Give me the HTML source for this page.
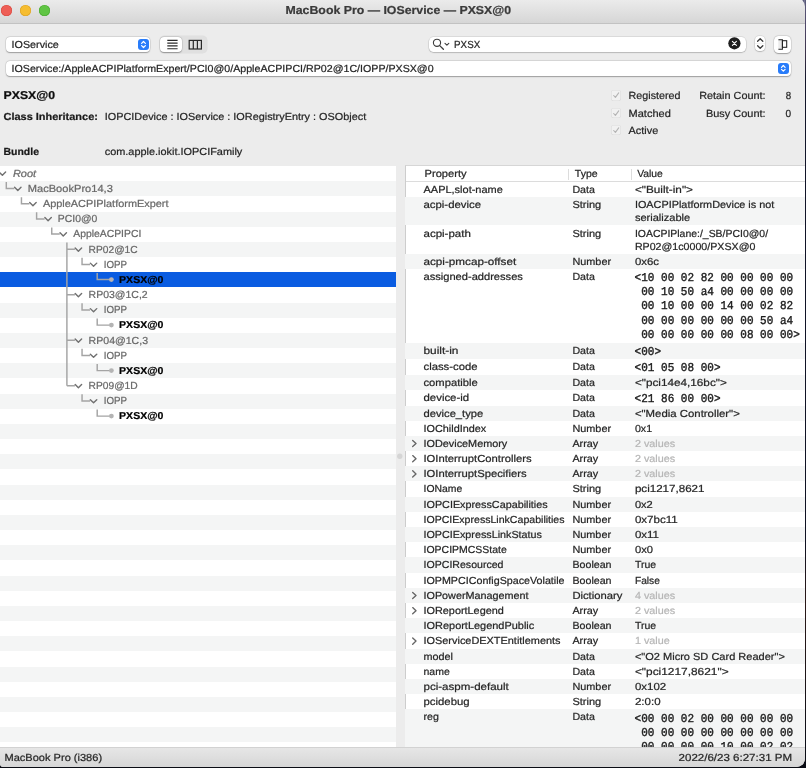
<!DOCTYPE html>
<html>
<head>
<meta charset="utf-8">
<title>MacBook Pro — IOService — PXSX@0</title>
<style>
*{margin:0;padding:0;box-sizing:border-box}
html,body{width:806px;height:768px;overflow:hidden}
body{background:linear-gradient(#5a5a7a 0,#50486a 25px,#3a3048 55px,#12152a 80px,#0e1122 540px,#2a1818 600px,#1c1418 680px,#0c0e18 740px,#0a0c14 100%);font-family:"Liberation Sans",sans-serif;font-size:10.2px;color:#262626;position:relative}
.abs{position:absolute}
#win{position:absolute;left:0;top:0;width:804.8px;height:766.5px;background:#ececec;border-radius:0 0 8.5px 3.5px;overflow:hidden;will-change:transform}
#title{position:absolute;left:0;top:0;width:100%;height:24px;background:linear-gradient(#ebebeb,#d6d6d6);border-bottom:1px solid #c2c2c2}
.tl{position:absolute;top:5px;width:11.2px;height:11.2px;border-radius:50%}
.field{position:absolute;background:#fff;border-radius:4px;box-shadow:0 0 0 .5px rgba(0,0,0,.10),0 .6px 1.2px rgba(0,0,0,.30)}
.txt{position:absolute;white-space:nowrap;line-height:12px;transform-origin:0 0;text-rendering:geometricPrecision;-webkit-text-stroke:.22px}
.mono{position:absolute;white-space:pre;font-family:"Liberation Mono",monospace;font-size:11.5px;line-height:14.22px;color:#1c1c1c;transform:scaleX(.949);transform-origin:0 0;text-rendering:geometricPrecision;-webkit-text-stroke:.4px}
.blue{position:absolute;width:11px;height:11px;border-radius:3px;background:#287cfa}
#left{position:absolute;left:0;top:166px;width:396px;height:581.4px;overflow:hidden;
 background:repeating-linear-gradient(#fff 0,#fff 15.17px,#f4f5f5 15.17px,#f4f5f5 30.34px)}
#right{position:absolute;left:404.7px;top:164.9px;width:401px;height:582.5px;background:#fff;overflow:hidden;border-left:1px solid #cdcdcd;border-top:1px solid #d6d6d6}
#status{position:absolute;left:0;top:747.4px;width:100%;height:19.2px;background:linear-gradient(#e6e6e6,#d6d6d6);border-top:1px solid #d2d2d2}
.g{position:absolute;left:405.4px;width:400px;background:#f4f5f5}
</style>
</head>
<body>
<div id="win">

<div id="title">
<div class="tl" style="left:1px;background:#ee5e56;box-shadow:inset 0 0 0 .6px #d9473e"></div>
<div class="tl" style="left:20px;background:#f6bd30;box-shadow:inset 0 0 0 .6px #dca122"></div>
<div class="tl" style="left:39px;background:#60c544;box-shadow:inset 0 0 0 .6px #49a830"></div>
</div>
<div class="txt" style="left:285px;top:5px;font-size:11.6px;color:#3a3a3a;transform:translateX(0.50px) scaleX(1.0628);font-weight:bold;">MacBook Pro — IOService — PXSX@0</div>
<div class="field" style="left:5.5px;top:36.5px;width:144.5px;height:15.5px"></div>
<div class="blue" style="left:137.7px;top:39px"><svg width="11" height="11" viewBox="0 0 11 11" style="position:absolute;left:0;top:0"><path d="M3.6 4.4 5.5 2.5 7.4 4.4M3.6 6.6 5.5 8.5 7.4 6.6" fill="none" stroke="#fff" stroke-width="1.2" stroke-linecap="round" stroke-linejoin="round"/></svg></div>
<div class="abs" style="left:159.5px;top:36.2px;width:47px;height:16.4px;border-radius:4.5px;background:#e0e0e0;box-shadow:0 0 0 .5px rgba(0,0,0,.06)"></div>
<div class="field" style="left:160px;top:36.6px;width:21.5px;height:15.6px;border-radius:4px"></div>
<svg class="abs" style="left:159.5px;top:36.2px" width="47" height="17" viewBox="0 0 47 17"><path d="M7.3 4.4h10.3M7.3 7.1h10.3M7.3 9.9h10.3M7.3 12.7h10.3" stroke="#2a2a2a" stroke-width="1.15" fill="none"/><rect x="29.2" y="4.4" width="12.2" height="8.6" fill="none" stroke="#2a2a2a" stroke-width="1.2"/><path d="M33.3 4.4v8.6M37.4 4.4v8.6" stroke="#2a2a2a" stroke-width="1.2"/></svg>
<div class="field" style="left:429px;top:36.8px;width:317px;height:15.5px;border-radius:4.5px"></div>
<svg class="abs" style="left:431px;top:37px" width="22" height="15" viewBox="0 0 22 15"><circle cx="6" cy="5.8" r="3.6" fill="none" stroke="#3c3c3c" stroke-width="1.1"/><path d="M8.7 8.6 12.4 12.3" stroke="#3c3c3c" stroke-width="1.3" stroke-linecap="round"/><path d="M14 6.3 15.9 8.1 17.8 6.3" fill="none" stroke="#3c3c3c" stroke-width="1.1" stroke-linecap="round" stroke-linejoin="round"/></svg>
<svg class="abs" style="left:728px;top:36.8px" width="13" height="13" viewBox="0 0 13 13"><circle cx="6.4" cy="6.3" r="6.1" fill="#1f1f1f"/><path d="M4.4 4.3 8.4 8.3M8.4 4.3 4.4 8.3" stroke="#fff" stroke-width="1.1" stroke-linecap="round"/></svg>
<div class="field" style="left:754.8px;top:36.1px;width:10.4px;height:15.2px;border-radius:4px"></div>
<svg class="abs" style="left:754.8px;top:36.1px" width="11" height="16" viewBox="0 0 11 16"><path d="M2.6 5.3 5.2 2.7 7.8 5.3M2.6 9.7 5.2 12.3 7.8 9.7" fill="none" stroke="#3a3a3a" stroke-width="1.3" stroke-linecap="round" stroke-linejoin="round"/><path d="M0 7.6h10.4" stroke="#e8e8e8" stroke-width=".6"/></svg>
<div class="field" style="left:774px;top:36.1px;width:16.9px;height:16.8px;border-radius:4.5px"></div>
<svg class="abs" style="left:774px;top:36px" width="17" height="17" viewBox="0 0 17 17"><rect x="4.3" y="4.2" width="3.4" height="8.4" fill="#ebebeb"/><path d="M4.4 3.7h4v9.5h-4" fill="none" stroke="#222" stroke-width="1.05"/><rect x="8.4" y="4.7" width="4.3" height="6.6" fill="none" stroke="#222" stroke-width="1.05"/></svg>
<div class="field" style="left:5.5px;top:61px;width:785.3px;height:15px"></div>
<div class="blue" style="left:778px;top:63px;width:10.6px;height:10.6px"><svg width="11" height="11" viewBox="0 0 11 11" style="position:absolute;left:0;top:0"><path d="M3.5 4.3 5.3 2.5 7.1 4.3M3.5 6.4 5.3 8.2 7.1 6.4" fill="none" stroke="#fff" stroke-width="1.2" stroke-linecap="round" stroke-linejoin="round"/></svg></div>

<div class="txt" style="left:11px;top:40px;font-size:10.2px;color:#262626;transform:translateX(0.60px) scaleX(1.0541);">IOService</div>
<div class="txt" style="left:454px;top:40px;font-size:10.2px;color:#262626;transform:translateX(0.10px) scaleX(0.9591);">PXSX</div>
<div class="txt" style="left:11px;top:64px;font-size:10.2px;color:#262626;transform:translateX(0.60px) scaleX(1.0456);">IOService:/AppleACPIPlatformExpert/PCI0@0/AppleACPIPCI/RP02@1C/IOPP/PXSX@0</div>
<div class="txt" style="left:3px;top:90px;font-size:11.4px;color:#0d0d0d;transform:translateX(0.50px) scaleX(1.0780);font-weight:bold;">PXSX@0</div>
<div class="txt" style="left:3px;top:112px;font-size:10.2px;color:#1a1a1a;transform:translateX(0.50px) scaleX(1.0755);font-weight:bold;">Class Inheritance:</div>
<div class="txt" style="left:104px;top:112px;font-size:10.2px;color:#262626;transform:translateX(0.70px) scaleX(1.0667);">IOPCIDevice : IOService : IORegistryEntry : OSObject</div>
<div class="txt" style="left:3px;top:147px;font-size:10.2px;color:#1a1a1a;transform:translateX(0.50px) scaleX(1.0271);font-weight:bold;">Bundle</div>
<div class="txt" style="left:104px;top:147px;font-size:10.2px;color:#262626;transform:translateX(0.70px) scaleX(1.0709);">com.apple.iokit.IOPCIFamily</div>
<div class="abs" style="left:610.7px;top:90.3px;width:10.4px;height:10.4px;border-radius:2.6px;background:#f1f1f1;box-shadow:inset 0 0 0 .6px #dcdcdc"><svg width="10.4" height="10.4" viewBox="0 0 10.4 10.4" style="position:absolute;left:0;top:0"><path d="M2.7 5.5 4.4 7.4 7.7 2.9" fill="none" stroke="#b4b4b4" stroke-width="1.1" stroke-linecap="round" stroke-linejoin="round"/></svg></div>
<div class="txt" style="left:628px;top:91px;font-size:10.4px;color:#262626;transform:translateX(0.60px) scaleX(1.0319);">Registered</div>
<div class="abs" style="left:610.7px;top:107.6px;width:10.4px;height:10.4px;border-radius:2.6px;background:#f1f1f1;box-shadow:inset 0 0 0 .6px #dcdcdc"><svg width="10.4" height="10.4" viewBox="0 0 10.4 10.4" style="position:absolute;left:0;top:0"><path d="M2.7 5.5 4.4 7.4 7.7 2.9" fill="none" stroke="#b4b4b4" stroke-width="1.1" stroke-linecap="round" stroke-linejoin="round"/></svg></div>
<div class="txt" style="left:628px;top:109px;font-size:10.4px;color:#262626;transform:translateX(0.60px) scaleX(1.0579);">Matched</div>
<div class="abs" style="left:610.7px;top:124.7px;width:10.4px;height:10.4px;border-radius:2.6px;background:#f1f1f1;box-shadow:inset 0 0 0 .6px #dcdcdc"><svg width="10.4" height="10.4" viewBox="0 0 10.4 10.4" style="position:absolute;left:0;top:0"><path d="M2.7 5.5 4.4 7.4 7.7 2.9" fill="none" stroke="#b4b4b4" stroke-width="1.1" stroke-linecap="round" stroke-linejoin="round"/></svg></div>
<div class="txt" style="left:628px;top:126px;font-size:10.4px;color:#262626;transform:translateX(0.60px) scaleX(1.0452);">Active</div>
<div class="txt" style="left:699px;top:91px;font-size:10.4px;color:#262626;transform:translateX(0.20px) scaleX(1.0441);">Retain Count:</div>
<div class="txt" style="left:706px;top:109px;font-size:10.4px;color:#262626;transform:translateX(0.00px) scaleX(1.0520);">Busy Count:</div>
<div class="txt" style="left:785px;top:91px;font-size:10.4px;color:#262626;transform:translateX(0.80px) scaleX(0.9339);">8</div>
<div class="txt" style="left:785px;top:109px;font-size:10.4px;color:#262626;transform:translateX(0.60px) scaleX(0.9685);">0</div>
<div id="left"></div>
<div class="abs" style="left:0;top:272.19px;width:396px;height:15.17px;background:#0a5ce1"></div>
<svg class="abs" style="left:0;top:0" width="400" height="430" viewBox="0 0 400 430"><path d="M6.30 181.97V188.57H14.30M21.45 197.14V203.74H29.45M36.60 212.31V218.91H44.60M51.75 227.48V234.08H59.75M66.90 242.45V385.78M66.90 249.25H74.90M82.05 257.82V264.42H90.05M97.20 272.99V279.59H109.80M66.90 294.76H74.90M82.05 303.33V309.93H90.05M97.20 318.50V325.10H109.80M66.90 340.27H74.90M82.05 348.84V355.44H90.05M97.20 364.01V370.61H109.80M66.90 385.78H74.90M82.05 394.35V400.95H90.05M97.20 409.52V416.12H109.80" fill="none" stroke="#a4a4a4" stroke-width="1.45"/><path d="M-0.80 172.10L2.40 175.30L5.60 172.10M14.60 187.27L17.80 190.47L21.00 187.27M29.75 202.44L32.95 205.64L36.15 202.44M44.90 217.61L48.10 220.81L51.30 217.61M60.05 232.78L63.25 235.98L66.45 232.78M75.20 247.95L78.40 251.15L81.60 247.95M90.35 263.12L93.55 266.32L96.75 263.12M75.20 293.46L78.40 296.66L81.60 293.46M90.35 308.63L93.55 311.83L96.75 308.63M75.20 338.97L78.40 342.17L81.60 338.97M90.35 354.14L93.55 357.34L96.75 354.14M75.20 384.48L78.40 387.68L81.60 384.48M90.35 399.65L93.55 402.85L96.75 399.65" fill="none" stroke="#707070" stroke-width="1.4" stroke-linecap="round" stroke-linejoin="round"/><circle cx="111.40" cy="279.59" r="2.4" fill="#b9b3b3"/><circle cx="111.40" cy="325.10" r="2.4" fill="#b4b4b4"/><circle cx="111.40" cy="370.61" r="2.4" fill="#b4b4b4"/><circle cx="111.40" cy="416.12" r="2.4" fill="#b4b4b4"/></svg>
<div class="txt" style="left:12px;top:169px;font-size:10.2px;color:#686868;transform:translateX(0.90px) scaleX(1.0777);font-style:italic;">Root</div>
<div class="txt" style="left:27px;top:184px;font-size:10.2px;color:#686868;transform:translateX(0.80px) scaleX(1.0876);">MacBookPro14,3</div>
<div class="txt" style="left:42px;top:199px;font-size:10.2px;color:#686868;transform:translateX(0.90px) scaleX(1.0720);">AppleACPIPlatformExpert</div>
<div class="txt" style="left:57px;top:214px;font-size:10.2px;color:#686868;transform:translateX(0.80px) scaleX(1.0206);">PCI0@0</div>
<div class="txt" style="left:73px;top:229px;font-size:10.2px;color:#686868;transform:translateX(0.20px) scaleX(1.0195);">AppleACPIPCI</div>
<div class="txt" style="left:88px;top:245px;font-size:10.2px;color:#686868;transform:translateX(0.60px) scaleX(1.0039);">RP02@1C</div>
<div class="txt" style="left:103px;top:260px;font-size:10.2px;color:#686868;transform:translateX(0.70px) scaleX(0.9560);">IOPP</div>
<div class="txt" style="left:119px;top:275px;font-size:10.0px;color:#000;transform:translateX(0.10px) scaleX(1.0526);font-weight:bold;">PXSX@0</div>
<div class="txt" style="left:88px;top:290px;font-size:10.2px;color:#686868;transform:translateX(0.60px) scaleX(1.0293);">RP03@1C,2</div>
<div class="txt" style="left:103px;top:305px;font-size:10.2px;color:#686868;transform:translateX(0.70px) scaleX(0.9560);">IOPP</div>
<div class="txt" style="left:119px;top:320px;font-size:10.0px;color:#000;transform:translateX(0.10px) scaleX(1.0526);font-weight:bold;">PXSX@0</div>
<div class="txt" style="left:88px;top:336px;font-size:10.2px;color:#686868;transform:translateX(0.60px) scaleX(1.0363);">RP04@1C,3</div>
<div class="txt" style="left:103px;top:351px;font-size:10.2px;color:#686868;transform:translateX(0.70px) scaleX(0.9560);">IOPP</div>
<div class="txt" style="left:119px;top:366px;font-size:10.0px;color:#000;transform:translateX(0.10px) scaleX(1.0526);font-weight:bold;">PXSX@0</div>
<div class="txt" style="left:88px;top:381px;font-size:10.2px;color:#686868;transform:translateX(0.60px) scaleX(1.0039);">RP09@1D</div>
<div class="txt" style="left:103px;top:396px;font-size:10.2px;color:#686868;transform:translateX(0.70px) scaleX(0.9560);">IOPP</div>
<div class="txt" style="left:119px;top:411px;font-size:10.0px;color:#000;transform:translateX(0.10px) scaleX(1.0526);font-weight:bold;">PXSX@0</div>
<div id="right"></div>
<div class="abs" style="left:405.5px;top:181.2px;width:400px;height:1px;background:#dcdcdc"></div>
<div class="abs" style="left:568.4px;top:168.5px;width:1px;height:11px;background:#dcdcdc"></div>
<div class="abs" style="left:631.1px;top:168.5px;width:1px;height:11px;background:#dcdcdc"></div>
<div class="txt" style="left:424px;top:169px;font-size:10.2px;color:#262626;transform:translateX(0.50px) scaleX(1.0947);">Property</div>
<div class="txt" style="left:574px;top:169px;font-size:10.2px;color:#262626;transform:translateX(0.80px) scaleX(1.0356);">Type</div>
<div class="txt" style="left:637px;top:169px;font-size:10.2px;color:#262626;transform:translateX(0.20px) scaleX(1.0145);">Value</div>
<div class="abs" style="left:0;top:0;width:806px;height:747.4px;overflow:hidden">
<div class="txt" style="left:423px;top:185px;font-size:10.2px;color:#262626;transform:translateX(0.50px) scaleX(1.0773);">AAPL,slot-name</div>
<div class="txt" style="left:572px;top:185px;font-size:10.2px;color:#262626;transform:translateX(0.40px) scaleX(1.0442);">Data</div>
<div class="txt" style="left:634px;top:185px;font-size:10.2px;color:#262626;transform:translateX(0.90px) scaleX(1.1543);">&lt;"Built-in"&gt;</div>
<div class="g" style="top:196.90px;height:28.30px"></div>
<div class="txt" style="left:423px;top:200px;font-size:10.2px;color:#262626;transform:translateX(0.50px) scaleX(1.1165);">acpi-device</div>
<div class="txt" style="left:572px;top:200px;font-size:10.2px;color:#262626;transform:translateX(0.40px) scaleX(1.0808);">String</div>
<div class="txt" style="left:634px;top:200px;font-size:10.2px;color:#262626;transform:translateX(0.90px) scaleX(1.0661);">IOACPIPlatformDevice is not</div>
<div class="txt" style="left:634px;top:213px;font-size:10.2px;color:#262626;transform:translateX(0.90px) scaleX(1.0857);">serializable</div>
<div class="txt" style="left:423px;top:229px;font-size:10.2px;color:#262626;transform:translateX(0.50px) scaleX(1.1296);">acpi-path</div>
<div class="txt" style="left:572px;top:229px;font-size:10.2px;color:#262626;transform:translateX(0.40px) scaleX(1.0808);">String</div>
<div class="txt" style="left:634px;top:229px;font-size:10.2px;color:#262626;transform:translateX(0.90px) scaleX(1.0255);">IOACPIPlane:/_SB/PCI0@0/</div>
<div class="txt" style="left:634px;top:242px;font-size:10.2px;color:#262626;transform:translateX(0.90px) scaleX(1.0450);">RP02@1c0000/PXSX@0</div>
<div class="g" style="top:253.70px;height:15.20px"></div>
<div class="txt" style="left:423px;top:257px;font-size:10.2px;color:#262626;transform:translateX(0.50px) scaleX(1.1474);">acpi-pmcap-offset</div>
<div class="txt" style="left:572px;top:257px;font-size:10.2px;color:#262626;transform:translateX(0.40px) scaleX(1.0668);">Number</div>
<div class="txt" style="left:634px;top:257px;font-size:10.2px;color:#262626;transform:translateX(0.90px) scaleX(1.1185);">0x6c</div>
<div class="txt" style="left:423px;top:272px;font-size:10.2px;color:#262626;transform:translateX(0.50px) scaleX(1.0899);">assigned-addresses</div>
<div class="txt" style="left:572px;top:272px;font-size:10.2px;color:#262626;transform:translateX(0.40px) scaleX(1.0442);">Data</div>
<div class="mono" style="left:634px;top:271px;font-size:12px;line-height:14.22px;transform:translateX(0.60px) scaleX(0.9174)">&lt;10 00 02 82 00 00 00 00
 00 10 50 a4 00 00 00 00
 00 10 00 00 14 00 02 82
 00 00 00 00 00 00 50 a4
 00 00 00 00 00 08 00 00&gt;</div>
<div class="g" style="top:342.60px;height:16.20px"></div>
<div class="txt" style="left:423px;top:346px;font-size:10.2px;color:#262626;transform:translateX(0.50px) scaleX(1.1648);">built-in</div>
<div class="txt" style="left:572px;top:346px;font-size:10.2px;color:#262626;transform:translateX(0.40px) scaleX(1.0442);">Data</div>
<div class="mono" style="left:634px;top:345px;font-size:12px;line-height:14.22px;transform:translateX(0.60px) scaleX(0.9174)">&lt;00&gt;</div>
<div class="txt" style="left:423px;top:362px;font-size:10.2px;color:#262626;transform:translateX(0.50px) scaleX(1.1096);">class-code</div>
<div class="txt" style="left:572px;top:362px;font-size:10.2px;color:#262626;transform:translateX(0.40px) scaleX(1.0442);">Data</div>
<div class="mono" style="left:634px;top:361px;font-size:12px;line-height:14.22px;transform:translateX(0.60px) scaleX(0.9174)">&lt;01 05 08 00&gt;</div>
<div class="g" style="top:374.90px;height:14.70px"></div>
<div class="txt" style="left:423px;top:378px;font-size:10.2px;color:#262626;transform:translateX(0.50px) scaleX(1.1008);">compatible</div>
<div class="txt" style="left:572px;top:378px;font-size:10.2px;color:#262626;transform:translateX(0.40px) scaleX(1.0442);">Data</div>
<div class="txt" style="left:634px;top:378px;font-size:10.2px;color:#262626;transform:translateX(0.90px) scaleX(1.1524);">&lt;"pci14e4,16bc"&gt;</div>
<div class="txt" style="left:423px;top:393px;font-size:10.2px;color:#262626;transform:translateX(0.50px) scaleX(1.1195);">device-id</div>
<div class="txt" style="left:572px;top:393px;font-size:10.2px;color:#262626;transform:translateX(0.40px) scaleX(1.0442);">Data</div>
<div class="mono" style="left:634px;top:392px;font-size:12px;line-height:14.22px;transform:translateX(0.60px) scaleX(0.9174)">&lt;21 86 00 00&gt;</div>
<div class="g" style="top:405.60px;height:15.00px"></div>
<div class="txt" style="left:423px;top:409px;font-size:10.2px;color:#262626;transform:translateX(0.50px) scaleX(1.0985);">device_type</div>
<div class="txt" style="left:572px;top:409px;font-size:10.2px;color:#262626;transform:translateX(0.40px) scaleX(1.0442);">Data</div>
<div class="txt" style="left:634px;top:409px;font-size:10.2px;color:#262626;transform:translateX(0.90px) scaleX(1.1172);">&lt;"Media Controller"&gt;</div>
<div class="txt" style="left:423px;top:424px;font-size:10.2px;color:#262626;transform:translateX(0.50px) scaleX(1.0650);">IOChildIndex</div>
<div class="txt" style="left:572px;top:424px;font-size:10.2px;color:#262626;transform:translateX(0.40px) scaleX(1.0668);">Number</div>
<div class="txt" style="left:634px;top:424px;font-size:10.2px;color:#262626;transform:translateX(0.90px) scaleX(1.0458);">0x1</div>
<div class="g" style="top:435.80px;height:15.20px"></div>
<div class="txt" style="left:423px;top:439px;font-size:10.2px;color:#262626;transform:translateX(0.50px) scaleX(1.0650);">IODeviceMemory</div>
<div class="txt" style="left:572px;top:439px;font-size:10.2px;color:#262626;transform:translateX(0.40px) scaleX(1.0588);">Array</div>
<div class="txt" style="left:634px;top:439px;font-size:10.2px;color:#b6b6b6;transform:translateX(0.90px) scaleX(1.0582);">2 values</div>
<div class="txt" style="left:423px;top:454px;font-size:10.2px;color:#262626;transform:translateX(0.50px) scaleX(1.1033);">IOInterruptControllers</div>
<div class="txt" style="left:572px;top:454px;font-size:10.2px;color:#262626;transform:translateX(0.40px) scaleX(1.0588);">Array</div>
<div class="txt" style="left:634px;top:454px;font-size:10.2px;color:#b6b6b6;transform:translateX(0.90px) scaleX(1.0582);">2 values</div>
<div class="g" style="top:466.20px;height:15.20px"></div>
<div class="txt" style="left:423px;top:469px;font-size:10.2px;color:#262626;transform:translateX(0.50px) scaleX(1.1033);">IOInterruptSpecifiers</div>
<div class="txt" style="left:572px;top:469px;font-size:10.2px;color:#262626;transform:translateX(0.40px) scaleX(1.0588);">Array</div>
<div class="txt" style="left:634px;top:469px;font-size:10.2px;color:#b6b6b6;transform:translateX(0.90px) scaleX(1.0582);">2 values</div>
<div class="txt" style="left:423px;top:484px;font-size:10.2px;color:#262626;transform:translateX(0.50px) scaleX(1.0191);">IOName</div>
<div class="txt" style="left:572px;top:484px;font-size:10.2px;color:#262626;transform:translateX(0.40px) scaleX(1.0808);">String</div>
<div class="txt" style="left:634px;top:484px;font-size:10.2px;color:#262626;transform:translateX(0.90px) scaleX(1.1378);">pci1217,8621</div>
<div class="g" style="top:496.60px;height:15.20px"></div>
<div class="txt" style="left:423px;top:500px;font-size:10.2px;color:#262626;transform:translateX(0.50px) scaleX(1.0593);">IOPCIExpressCapabilities</div>
<div class="txt" style="left:572px;top:500px;font-size:10.2px;color:#262626;transform:translateX(0.40px) scaleX(1.0668);">Number</div>
<div class="txt" style="left:634px;top:500px;font-size:10.2px;color:#262626;transform:translateX(0.90px) scaleX(1.0883);">0x2</div>
<div class="txt" style="left:423px;top:515px;font-size:10.2px;color:#262626;transform:translateX(0.50px) scaleX(1.0378);">IOPCIExpressLinkCapabilities</div>
<div class="txt" style="left:572px;top:515px;font-size:10.2px;color:#262626;transform:translateX(0.40px) scaleX(1.0668);">Number</div>
<div class="txt" style="left:634px;top:515px;font-size:10.2px;color:#262626;transform:translateX(0.90px) scaleX(1.1347);">0x7bc11</div>
<div class="g" style="top:527.00px;height:15.20px"></div>
<div class="txt" style="left:423px;top:530px;font-size:10.2px;color:#262626;transform:translateX(0.50px) scaleX(1.0566);">IOPCIExpressLinkStatus</div>
<div class="txt" style="left:572px;top:530px;font-size:10.2px;color:#262626;transform:translateX(0.40px) scaleX(1.0668);">Number</div>
<div class="txt" style="left:634px;top:530px;font-size:10.2px;color:#262626;transform:translateX(0.90px) scaleX(1.1281);">0x11</div>
<div class="txt" style="left:423px;top:545px;font-size:10.2px;color:#262626;transform:translateX(0.50px) scaleX(1.0289);">IOPCIPMCSState</div>
<div class="txt" style="left:572px;top:545px;font-size:10.2px;color:#262626;transform:translateX(0.40px) scaleX(1.0668);">Number</div>
<div class="txt" style="left:634px;top:545px;font-size:10.2px;color:#262626;transform:translateX(0.90px) scaleX(1.1005);">0x0</div>
<div class="g" style="top:557.40px;height:15.20px"></div>
<div class="txt" style="left:423px;top:560px;font-size:10.2px;color:#262626;transform:translateX(0.50px) scaleX(1.0390);">IOPCIResourced</div>
<div class="txt" style="left:572px;top:560px;font-size:10.2px;color:#262626;transform:translateX(0.40px) scaleX(1.0472);">Boolean</div>
<div class="txt" style="left:634px;top:560px;font-size:10.2px;color:#262626;transform:translateX(0.90px) scaleX(1.0294);">True</div>
<div class="txt" style="left:423px;top:576px;font-size:10.2px;color:#262626;transform:translateX(0.50px) scaleX(1.0508);">IOPMPCIConfigSpaceVolatile</div>
<div class="txt" style="left:572px;top:576px;font-size:10.2px;color:#262626;transform:translateX(0.40px) scaleX(1.0472);">Boolean</div>
<div class="txt" style="left:634px;top:576px;font-size:10.2px;color:#262626;transform:translateX(0.90px) scaleX(1.0022);">False</div>
<div class="g" style="top:587.80px;height:15.20px"></div>
<div class="txt" style="left:423px;top:591px;font-size:10.2px;color:#262626;transform:translateX(0.50px) scaleX(1.0603);">IOPowerManagement</div>
<div class="txt" style="left:572px;top:591px;font-size:10.2px;color:#262626;transform:translateX(0.40px) scaleX(1.1026);">Dictionary</div>
<div class="txt" style="left:634px;top:591px;font-size:10.2px;color:#b6b6b6;transform:translateX(0.90px) scaleX(1.0582);">4 values</div>
<div class="txt" style="left:423px;top:606px;font-size:10.2px;color:#262626;transform:translateX(0.50px) scaleX(1.0660);">IOReportLegend</div>
<div class="txt" style="left:572px;top:606px;font-size:10.2px;color:#262626;transform:translateX(0.40px) scaleX(1.0588);">Array</div>
<div class="txt" style="left:634px;top:606px;font-size:10.2px;color:#b6b6b6;transform:translateX(0.90px) scaleX(1.0582);">2 values</div>
<div class="g" style="top:618.20px;height:15.20px"></div>
<div class="txt" style="left:423px;top:621px;font-size:10.2px;color:#262626;transform:translateX(0.50px) scaleX(1.0746);">IOReportLegendPublic</div>
<div class="txt" style="left:572px;top:621px;font-size:10.2px;color:#262626;transform:translateX(0.40px) scaleX(1.0472);">Boolean</div>
<div class="txt" style="left:634px;top:621px;font-size:10.2px;color:#262626;transform:translateX(0.90px) scaleX(1.0294);">True</div>
<div class="txt" style="left:423px;top:636px;font-size:10.2px;color:#262626;transform:translateX(0.50px) scaleX(1.0710);">IOServiceDEXTEntitlements</div>
<div class="txt" style="left:572px;top:636px;font-size:10.2px;color:#262626;transform:translateX(0.40px) scaleX(1.0588);">Array</div>
<div class="txt" style="left:634px;top:636px;font-size:10.2px;color:#b6b6b6;transform:translateX(0.90px) scaleX(1.0581);">1 value</div>
<div class="g" style="top:648.60px;height:15.20px"></div>
<div class="txt" style="left:423px;top:652px;font-size:10.2px;color:#262626;transform:translateX(0.50px) scaleX(1.0619);">model</div>
<div class="txt" style="left:572px;top:652px;font-size:10.2px;color:#262626;transform:translateX(0.40px) scaleX(1.0442);">Data</div>
<div class="txt" style="left:634px;top:652px;font-size:10.2px;color:#262626;transform:translateX(0.90px) scaleX(1.0817);">&lt;"O2 Micro SD Card Reader"&gt;</div>
<div class="txt" style="left:423px;top:667px;font-size:10.2px;color:#262626;transform:translateX(0.50px) scaleX(1.0308);">name</div>
<div class="txt" style="left:572px;top:667px;font-size:10.2px;color:#262626;transform:translateX(0.40px) scaleX(1.0442);">Data</div>
<div class="txt" style="left:634px;top:667px;font-size:10.2px;color:#262626;transform:translateX(0.90px) scaleX(1.1665);">&lt;"pci1217,8621"&gt;</div>
<div class="g" style="top:679.00px;height:15.20px"></div>
<div class="txt" style="left:423px;top:682px;font-size:10.2px;color:#262626;transform:translateX(0.50px) scaleX(1.1327);">pci-aspm-default</div>
<div class="txt" style="left:572px;top:682px;font-size:10.2px;color:#262626;transform:translateX(0.40px) scaleX(1.0668);">Number</div>
<div class="txt" style="left:634px;top:682px;font-size:10.2px;color:#262626;transform:translateX(0.90px) scaleX(1.1263);">0x102</div>
<div class="txt" style="left:423px;top:697px;font-size:10.2px;color:#262626;transform:translateX(0.50px) scaleX(1.1159);">pcidebug</div>
<div class="txt" style="left:572px;top:697px;font-size:10.2px;color:#262626;transform:translateX(0.40px) scaleX(1.0808);">String</div>
<div class="txt" style="left:634px;top:697px;font-size:10.2px;color:#262626;transform:translateX(0.90px) scaleX(1.1329);">2:0:0</div>
<div class="g" style="top:709.40px;height:37.60px"></div>
<div class="txt" style="left:423px;top:712px;font-size:10.2px;color:#262626;transform:translateX(0.50px) scaleX(1.0445);">reg</div>
<div class="txt" style="left:572px;top:712px;font-size:10.2px;color:#262626;transform:translateX(0.40px) scaleX(1.0442);">Data</div>
<div class="mono" style="left:634px;top:712px;font-size:12px;line-height:14.22px;transform:translateX(0.60px) scaleX(0.9174)">&lt;00 00 02 00 00 00 00 00
 00 00 00 00 00 00 00 00
 00 00 00 00 10 00 02 02</div>
<svg class="abs" style="left:0;top:0" width="500" height="748" viewBox="0 0 500 748"><path d="M412.7 440.40L416 443.50L412.7 446.60M412.7 455.60L416 458.70L412.7 461.80M412.7 470.80L416 473.90L412.7 477.00M412.7 592.40L416 595.50L412.7 598.60M412.7 607.60L416 610.70L412.7 613.80M412.7 638.00L416 641.10L412.7 644.20" fill="none" stroke="#666" stroke-width="1.35" stroke-linecap="round" stroke-linejoin="round"/><circle cx="399.8" cy="456.3" r="2.7" fill="#d5d5d5"/></svg>
</div>
<div id="status"></div>
<div class="txt" style="left:4px;top:753px;font-size:10.2px;color:#262626;transform:translateX(0.50px) scaleX(1.0839);">MacBook Pro (i386)</div>
<div class="txt" style="left:678px;top:753px;font-size:10.2px;color:#262626;transform:translateX(0.60px) scaleX(1.1317);">2022/6/23 6:27:31 PM</div>
</div>
<svg class="abs" style="left:796px;top:0" width="10" height="8" viewBox="796 0 10 8"><path d="M802.3 0A10 10 0 0 1 804.8 6.6V0z" fill="#5a5a7c"/></svg>
</body>
</html>
